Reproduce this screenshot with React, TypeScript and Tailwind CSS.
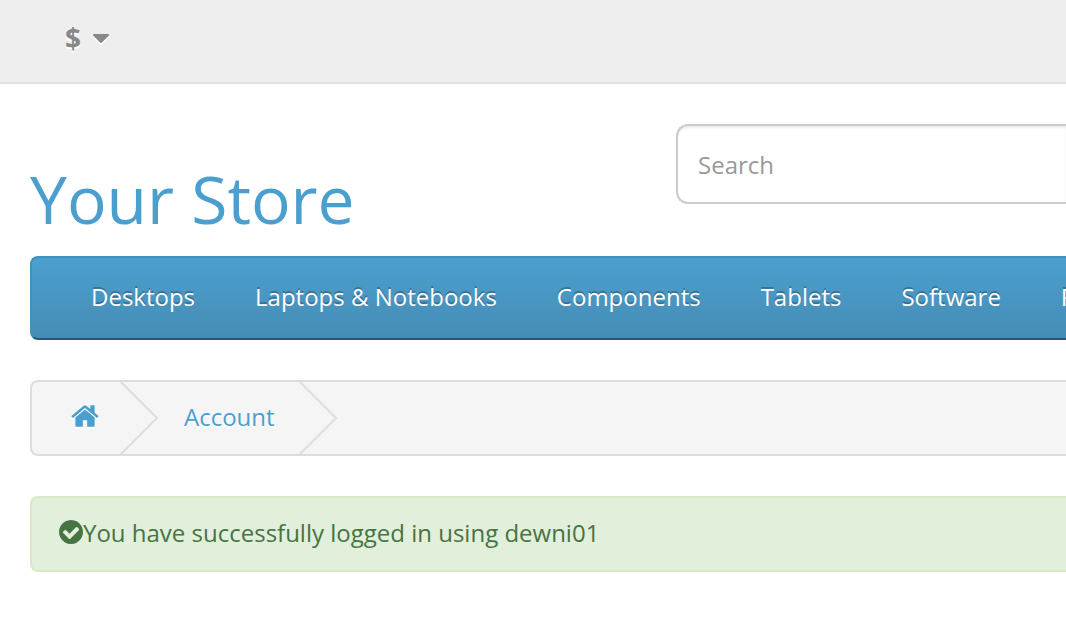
import React from "react";

const categories = [
  "Desktops",
  "Laptops & Notebooks",
  "Components",
  "Tablets",
  "Software",
  "Phones & PDAs",
];

function Icon({ d, className }: { d: string; className: string }) {
  return (
    <svg
      viewBox="0 0 1792 1792"
      fill="currentColor"
      aria-hidden="true"
      className={`shrink-0 ${className}`}
    >
      <path d={d} />
    </svg>
  );
}

const caretPath =
  "M1408 704q0 26-19 45l-448 448q-19 19-45 19t-45-19l-448-448q-19-19-19-45t19-45 45-19h896q26 0 45 19t19 45z";
const homePath =
  "M1472 992v480q0 26-19 45t-45 19h-384v-384h-256v384h-384q-26 0-45-19t-19-45v-480q0-1 .5-3t.5-3l575-474 575 474q1 2 1 6zm223-69l-62 74q-8 9-21 11h-3q-13 0-21-7l-692-577-692 577q-12 8-24 7-13-2-21-11l-62-74q-8-10-7-23.5t11-21.5l719-599q32-26 76-26t76 26l244 204v-195q0-14 9-23t23-9h192q14 0 23 9t9 23v408l219 182q10 8 11 21.5t-7 23.5z";
const checkPath =
  "M1412 734q0-28-18-46l-91-90q-19-19-45-19t-45 19l-408 407-226-226q-19-19-45-19t-45 19l-91 90q-18 18-18 46 0 27 18 45l362 362q19 19 45 19 27 0 46-19l543-543q18-18 18-45zm252 162q0 209-103 385.5t-279.5 279.5-385.5 103-385.5-103-279.5-279.5-103-385.5 103-385.5 279.5-279.5 385.5-103 385.5 103 279.5 279.5 103 385.5z";

function Chevron() {
  return (
    <svg
      viewBox="0 0 40 72"
      fill="none"
      stroke="#dddddd"
      strokeWidth="2"
      aria-hidden="true"
      className="h-18 w-10 shrink-0"
    >
      <path d="M0 -1 37 36 0 73" />
    </svg>
  );
}

export default function App() {
  return (
    <div className="min-h-screen overflow-x-hidden bg-white font-['Open_Sans','Noto_Sans',sans-serif] text-2xl leading-10 text-[#666666]">
      <div className="flex h-21 items-center border-b-2 border-[#e2e2e2] bg-[#eeeeee] pb-1.5 pl-[65px]">
        <button
          type="button"
          aria-label="Currency"
          className="flex items-center gap-0.5 text-[#888888] [text-shadow:0_2px_0_#fff]"
        >
          <strong className="w-5 text-left text-[28px] font-bold">$</strong>
          <Icon d={caretPath} className="size-7 drop-shadow-[0_2px_0_#fff]" />
        </button>
      </div>

      <div className="pl-[30px]">
        <header className="flex h-43 items-start pt-10">
          <h1 className="w-[646px] shrink-0 pt-[38px] text-[66px] leading-[72px]">
            <a href="#" className="text-[#4b9fcf]">
              Your Store
            </a>
          </h1>
          <input
            type="text"
            aria-label="Search"
            placeholder="Search"
            className="h-20 min-w-0 flex-1 rounded-l-xl border-2 border-r-0 border-[#cccccc] bg-white px-5 text-2xl text-[#555555] shadow-[inset_0_2px_2px_rgba(0,0,0,0.075)] outline-none placeholder:text-[#999999]"
          />
        </header>

        <nav className="flex h-21 items-center overflow-hidden rounded-l-lg border-2 border-r-0 border-[#4091bd] border-b-[#1f5a7c] bg-linear-to-b from-[#4b9fcf] to-[#468db5] pb-0.5 pl-[29px]">
          {categories.map((name) => (
            <a
              key={name}
              href="#"
              className="shrink-0 px-[30px] whitespace-nowrap text-white [text-shadow:0_-2px_0_rgba(0,0,0,0.25)]"
            >
              {name}
            </a>
          ))}
        </nav>

        <nav
          aria-label="Breadcrumb"
          className="mt-10 rounded-l-lg border-2 border-r-0 border-[#dddddd] bg-[#f5f5f5]"
        >
          <ol className="flex h-18 items-center text-[#4b9fcf] [text-shadow:0_2px_0_#fff]">
            <li className="flex items-center">
              <a href="#" aria-label="Home" className="pr-5 pb-1 pl-[38px]">
                <Icon d={homePath} className="size-[30px] drop-shadow-[0_2px_0_#fff]" />
              </a>
              <Chevron />
            </li>
            <li className="flex items-center pl-6">
              <a href="#" className="pr-6 pb-0.5">
                Account
              </a>
              <Chevron />
            </li>
          </ol>
        </nav>

        <div
          role="status"
          className="mt-10 flex h-19 items-center rounded-l-lg border-2 border-r-0 border-[#d9e8c6] bg-[#e1efdb] pb-0.5 pl-[25px] text-[#467443]"
        >
          <Icon d={checkPath} className="mb-0.5 size-7" />
          <span className="-ml-0.5">You have successfully logged in using dewni01</span>
        </div>
      </div>
    </div>
  );
}
